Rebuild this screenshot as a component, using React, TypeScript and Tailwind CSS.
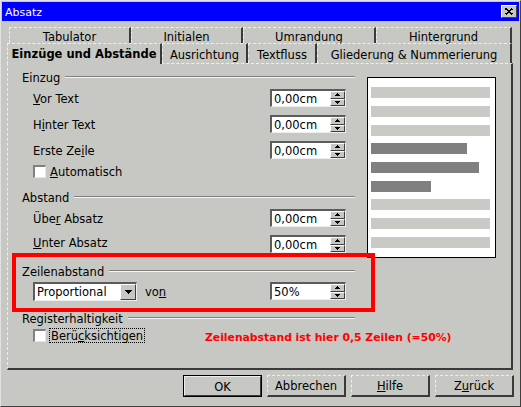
import React from "react";

const UpArrow = () => (
  <svg width="5" height="3" viewBox="0 0 5 3" shapeRendering="crispEdges">
    <polygon points="2.5,0 5,3 0,3" fill="#000" />
  </svg>
);

const DownArrow = ({ w = 5, h = 3 }: { w?: number; h?: number }) => (
  <svg width={w} height={h} viewBox={`0 0 ${w} ${h}`} shapeRendering="crispEdges">
    <polygon points={`0,0 ${w},0 ${w / 2},${h}`} fill="#000" />
  </svg>
);

const SpinField = ({ value }: { value: string }) => (
  <div className="flex h-[18px] w-[76px] border-t-2 border-l-2 border-r border-b border-t-[#5c5c5c] border-l-[#5c5c5c] border-r-[#eeeeee] border-b-[#eeeeee]">
    <div className="flex flex-1 items-center bg-white pl-[2px] pt-[3px]">{value}</div>
    <div className="flex w-[15px] flex-col">
      <div className="flex flex-1 items-center justify-center border-t border-l border-r border-b border-t-white border-l-white border-r-[#404040] border-b-[#404040] bg-[#c7c8c3]">
        <UpArrow />
      </div>
      <div className="flex flex-1 items-center justify-center border-t border-l border-r border-b border-t-white border-l-white border-r-[#404040] border-b-[#404040] bg-[#c7c8c3]">
        <DownArrow />
      </div>
    </div>
  </div>
);

const Checkbox = () => (
  <div className="h-[13px] w-[13px] border-t-2 border-l-2 border-r border-b border-t-[#808080] border-l-[#808080] border-r-[#e6e6e6] border-b-[#e6e6e6] bg-white" />
);

const GroupHeader = ({ label }: { label: string }) => (
  <div className="flex h-[12px] items-center">
    <span className="pt-[4px]">{label}</span>
    <div className="ml-[5px] h-[2px] flex-1 border-t border-b border-t-[#808080] border-b-[#f4f4f4]" />
  </div>
);

const FieldRow = ({
  label,
  value,
  className = "",
  labelClass = "pt-[4px]",
}: {
  label: React.ReactNode;
  value: string;
  className?: string;
  labelClass?: string;
}) => (
  <div className={`flex h-[18px] items-center pl-[11px] pr-[9px] ${className}`}>
    <span className={labelClass}>{label}</span>
    <div className="ml-auto">
      <SpinField value={value} />
    </div>
  </div>
);

const topTabs = [
  { label: "Tabulator", w: "w-[122px]" },
  { label: "Initialen", w: "w-[112px]" },
  { label: "Umrandung", w: "w-[133px]" },
  { label: "Hintergrund", w: "w-[136px]" },
];

const frontTabs = [
  { label: "Ausrichtung", w: "w-[86px]" },
  { label: "Textfluss", w: "w-[69px]" },
  { label: "Gliederung & Nummerierung", w: "w-[195px]" },
];

const previewBars = [
  { w: "w-[119px]", dark: false, mt: "mt-[9px]" },
  { w: "w-[119px]", dark: false, mt: "mt-[8px]" },
  { w: "w-[119px]", dark: false, mt: "mt-[8px]" },
  { w: "w-[96px]", dark: true, mt: "mt-[7px]" },
  { w: "w-[108px]", dark: true, mt: "mt-[8px]" },
  { w: "w-[60px]", dark: true, mt: "mt-[8px]" },
  { w: "w-[119px]", dark: false, mt: "mt-[7px]" },
  { w: "w-[119px]", dark: false, mt: "mt-[8px]" },
  { w: "w-[119px]", dark: false, mt: "mt-[8px]" },
];

const tabBase =
  "flex items-center justify-center border-t border-l border-r-2 border-dashed [border-right-style:solid] border-t-[#eeeeee] border-l-[#eeeeee] border-r-[#3a3a3a]";

const btnBase =
  "flex h-[22px] w-[79px] items-center justify-center border-t border-l border-r-2 border-b-2 border-dashed [border-right-style:solid] [border-bottom-style:solid] border-t-[#eeeeee] border-l-[#eeeeee] border-r-[#3a3a3a] border-b-[#3a3a3a] pt-[3px]";

export default function App() {
  return (
    <div className="h-[407px] w-[521px] overflow-hidden border border-t-[#e2e2e2] border-l-[#e2e2e2] border-r-[#404040] border-b-[#404040] bg-[#c7c8c3] p-[1px] font-['DejaVu_Sans',sans-serif] text-[11.5px] leading-none text-black">
      {/* title bar */}
      <div className="flex h-[19px] items-center bg-[#0000ff] pl-[3px] pr-[2px] text-[11px] text-white">
        <span className="pt-[2px]">Absatz</span>
        <div className="ml-auto flex h-[13px] w-[16px] items-center justify-center border-t border-l border-r border-b border-t-white border-l-white border-r-[#404040] border-b-[#404040] bg-[#c7c8c3]">
          <svg width="8" height="7" viewBox="0 0 8 7" shapeRendering="crispEdges">
            <path d="M0.5 0.5 L7.5 6.5 M7.5 0.5 L0.5 6.5" stroke="#000" strokeWidth="1.6" />
          </svg>
        </div>
      </div>

      {/* tabs */}
      <div className="mt-[6px] flex h-[16px] pl-[7px]">
        {topTabs.map((t) => (
          <div key={t.label} className={`${tabBase} ${t.w} pt-[5px]`}>
            {t.label}
          </div>
        ))}
      </div>
      <div className="flex h-[20px] items-end pl-[5px]">
        <div className="relative z-10 -mb-[1px] flex h-[21px] w-[155px] items-center justify-center border-t border-l border-r-2 border-dashed [border-right-style:solid] border-t-[#eeeeee] border-l-[#eeeeee] border-r-[#3a3a3a] bg-[#c7c8c3] pt-[2px] font-bold">
          Einzüge und Abstände
        </div>
        {frontTabs.map((t) => (
          <div key={t.label} className={`${tabBase} ${t.w} h-[20px] pt-[4px]`}>
            {t.label}
          </div>
        ))}
      </div>

      {/* panel */}
      <div className="relative ml-[5px] h-[307px] w-[506px] border-t border-l border-r-2 border-b-2 border-dashed [border-right-style:solid] [border-bottom-style:solid] border-t-[#eeeeee] border-l-[#eeeeee] border-r-[#3a3a3a] border-b-[#3a3a3a] pl-[14px] pt-[7px]">
        <div className="flex">
          <div className="flex w-[333px] flex-col">
            <GroupHeader label="Einzug" />
            <FieldRow
              className="mt-[6px]"
              label={
                <>
                  <span className="underline">V</span>or Text
                </>
              }
              value="0,00cm"
            />
            <FieldRow
              className="mt-[8px]"
              label={
                <>
                  H<span className="underline">i</span>nter Text
                </>
              }
              value="0,00cm"
            />
            <FieldRow
              className="mt-[8px]"
              label={
                <>
                  Erste Ze<span className="underline">i</span>le
                </>
              }
              value="0,00cm"
            />
            <div className="mt-[6px] flex h-[12px] items-center pl-[11px]">
              <Checkbox />
              <span className="ml-[4px] pt-[3px]">
                <span className="underline">A</span>utomatisch
              </span>
            </div>

            <div className="mt-[14px]">
              <GroupHeader label="Abstand" />
            </div>
            <FieldRow
              className="mt-[6px]"
              label={
                <>
                  Übe<span className="underline">r</span> Absatz
                </>
              }
              value="0,00cm"
            />
            <FieldRow
              className="mt-[8px]"
              labelClass="pb-[1px]"
              label={
                <>
                  <span className="underline">U</span>nter Absatz
                </>
              }
              value="0,00cm"
            />

            <div className="mt-[12px]">
              <GroupHeader label="Zeilenabstand" />
            </div>
            <div className="mt-[5px] flex h-[18px] items-center pl-[11px] pr-[9px]">
              <div className="flex h-[19px] w-[104px] border-t-2 border-l-2 border-r border-b border-t-[#5c5c5c] border-l-[#5c5c5c] border-r-[#eeeeee] border-b-[#eeeeee]">
                <div className="flex flex-1 items-center bg-white pl-[2px] pt-[3px]">Proportional</div>
                <div className="flex w-[16px] items-center justify-center border-t border-l border-r border-b border-t-white border-l-white border-r-[#404040] border-b-[#404040] bg-[#c7c8c3]">
                  <DownArrow w={7} h={4} />
                </div>
              </div>
              <span className="ml-[8px] pt-[4px]">
                vo<span className="underline">n</span>
              </span>
              <div className="ml-auto">
                <SpinField value="50%" />
              </div>
            </div>
          </div>

          {/* preview */}
          <div className="ml-[12px] mt-[6px] flex h-[181px] w-[129px] flex-col border border-black bg-white pl-[3px]">
            {previewBars.map((b, i) => (
              <div
                key={i}
                className={`h-[11px] ${b.w} ${b.mt} ${b.dark ? "bg-[#808080]" : "bg-[#c9cac6]"}`}
              />
            ))}
          </div>
        </div>

        <div className="mt-[12px] w-[333px]">
          <GroupHeader label="Registerhaltigkeit" />
        </div>
        <div className="mt-[5px] flex h-[13px] items-center pl-[11px]">
          <div className="flex w-[172px] items-center">
            <Checkbox />
            <span className="ml-[3px] border border-dotted border-black px-[1px] pt-[2px]">
              Berü<span className="underline">c</span>ksichtigen
            </span>
          </div>
          <span className="pt-[5px] text-[10.8px] font-bold text-[#ff0000]">
            Zeilenabstand ist hier 0,5 Zeilen (=50%)
          </span>
        </div>

        {/* annotation frame */}
        <div className="absolute left-[4px] top-[189px] h-[59px] w-[363px] border-4 border-[#ff0000]" />
      </div>

      {/* buttons */}
      <div className="mt-[5px] flex justify-end gap-[5px] pr-[5px]">
        <div className="flex h-[22px] w-[79px] items-center justify-center border border-black">
          <div className="flex h-full w-full items-center justify-center border-t border-l border-r border-b border-t-[#eeeeee] border-l-[#eeeeee] border-r-[#3a3a3a] border-b-[#3a3a3a] pt-[3px]">
            OK
          </div>
        </div>
        <div className={btnBase}>Abbrechen</div>
        <div className={btnBase}>
          <span>
            <span className="underline">H</span>ilfe
          </span>
        </div>
        <div className={btnBase}>
          <span>
            Z<span className="underline">u</span>rück
          </span>
        </div>
      </div>
    </div>
  );
}
